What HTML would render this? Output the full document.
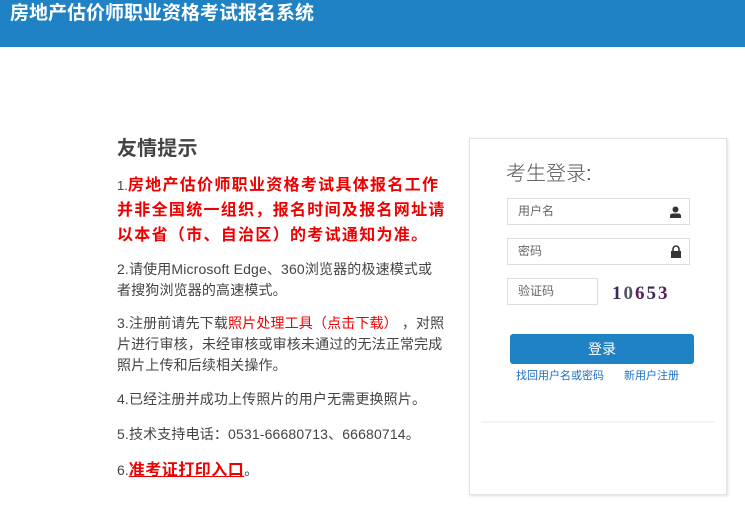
<!DOCTYPE html>
<html><head><meta charset="utf-8"><style>
*{margin:0;padding:0;box-sizing:border-box}
body{width:745px;height:514px;background:#fff;font-family:"Liberation Sans","Noto Sans CJK SC",sans-serif;position:relative;overflow:hidden;color:#444}
.hd{position:absolute;left:0;top:0;width:745px;height:47px;background:#1f82c4}
.hd span{position:absolute;left:10px;top:2px;color:#fff;font-size:19px;font-weight:bold;line-height:24px}
.a{position:absolute;left:117px;font-size:14px;line-height:21px;color:#444;width:333px;letter-spacing:0.15px}
.r{color:#e00;font-weight:bold;font-size:16px;letter-spacing:1.3px}
.box{position:absolute;left:469px;top:138px;width:258px;height:357px;border:1px solid #e3e3e3;box-shadow:1px 1px 3px #ddd}
.in{position:absolute;border:1px solid #ddd;height:27px;font-size:12px;color:#666;padding-left:10px;line-height:25px}
</style></head><body>
<div class="hd"><span>房地产估价师职业资格考试报名系统</span></div>
<div class="a" style="top:136px;font-size:20px;font-weight:bold;line-height:26px">友情提示</div>
<div class="a" style="top:173px;line-height:24px;width:336px;letter-spacing:0"><span style="font-size:13px">1.</span><span class="r">房地产估价师职业资格考试具体报名工作并非全国统一组织，报名时间及报名网址请以本省（市、自治区）的考试通知为准。</span></div>
<div class="a" style="top:259px;width:360px">2.请使用Microsoft Edge、360浏览器的极速模式或<br>者搜狗浏览器的高速模式。</div>
<div class="a" style="top:313px">3.注册前请先下载<span style="color:#e00">照片处理工具（点击下载）</span>&nbsp;，对照片进行审核，未经审核或审核未通过的无法正常完成照片上传和后续相关操作。</div>
<div class="a" style="top:389px">4.已经注册并成功上传照片的用户无需更换照片。</div>
<div class="a" style="top:424px">5.技术支持电话：0531-66680713、66680714。</div>
<div class="a" style="top:458px;line-height:24px;letter-spacing:0">6.<span class="r" style="text-decoration:underline;letter-spacing:0.5px">准考证打印入口</span>。</div>
<div class="box"></div>
<div style="position:absolute;left:506px;top:161px;font-size:20px;color:#555;line-height:26px;font-weight:300">考生登录:</div>
<div class="in" style="left:507px;top:198px;width:183px">用户名<svg style="position:absolute;right:8px;top:7px" width="11" height="12" viewBox="0 0 11 12"><circle cx="5.5" cy="3.5" r="3" fill="#333"/><path d="M0 12 L0 10 Q0 7.5 3 7.5 L8 7.5 Q11 7.5 11 10 L11 12Z" fill="#333"/></svg></div>
<div class="in" style="left:507px;top:238px;width:183px">密码<svg style="position:absolute;right:8px;top:6px" width="10" height="13" viewBox="0 0 10 13"><path d="M2 6 V4 A3 3 0 0 1 8 4 V6" stroke="#333" stroke-width="1.6" fill="none"/><rect x="0" y="6" width="10" height="7" fill="#333"/></svg></div>
<div class="in" style="left:507px;top:278px;width:91px">验证码</div>
<div style="position:absolute;left:612px;top:283px;font-family:'Liberation Serif',serif;font-size:19px;font-weight:bold;letter-spacing:2px;color:#3a2a50">1<span style="color:#556">0</span><span style="color:#5a1e5a">6</span>5<span style="color:#5a1e5a">3</span></div>
<div style="position:absolute;left:510px;top:334px;width:184px;height:30px;background:#1e82c4;border-radius:3px;color:#fff;font-size:14px;text-align:center;line-height:30px">登录</div>
<div style="position:absolute;left:516px;top:369px;font-size:11px;color:#1e6fc0;line-height:14px">找回用户名或密码</div>
<div style="position:absolute;left:624px;top:369px;font-size:11px;color:#1e6fc0;line-height:14px">新用户注册</div>
<div style="position:absolute;left:481px;top:421px;width:234px;height:2px;background:#f3f3f3"></div>
</body></html>
